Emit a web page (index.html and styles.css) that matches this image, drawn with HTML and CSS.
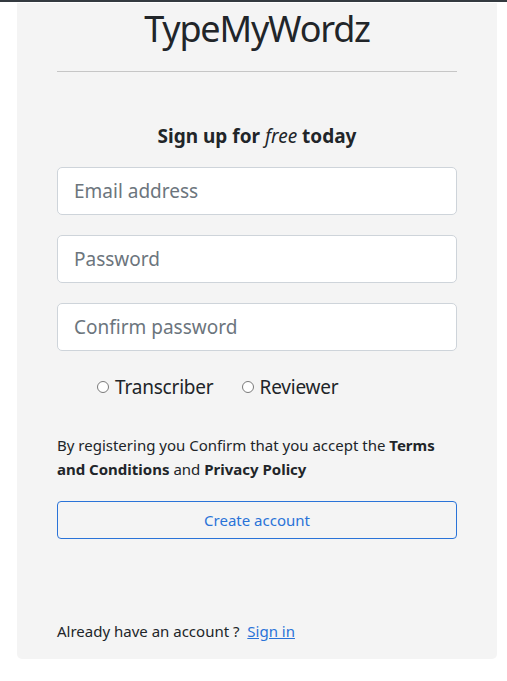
FILE: index.html
```html
<!DOCTYPE html>
<html lang="en">
<head>
<meta charset="utf-8">
<title>TypeMyWordz - Sign up</title>
<link rel="stylesheet" href="styles.css">
</head>
<body>
<div class="topbar"></div>
<main class="card">
  <h1 class="brand">TypeMyWordz</h1>
  <hr class="divider">
  <h2 class="heading">Sign up for <em>free</em> today</h2>
  <form class="form">
    <input class="field" type="email" placeholder="Email address">
    <input class="field" type="password" placeholder="Password">
    <input class="field" type="password" placeholder="Confirm password">
    <div class="roles">
      <label class="role"><input type="radio" name="role" class="radio"> Transcriber</label>
      <label class="role"><input type="radio" name="role" class="radio"> Reviewer</label>
    </div>
    <p class="terms">By registering you Confirm that you accept the <strong>Terms and Conditions</strong> and <strong>Privacy Policy</strong></p>
    <button type="button" class="btn">Create account</button>
  </form>
  <p class="signin">Already have an account ? &nbsp;<a href="#" class="link">Sign in</a></p>
</main>
</body>
</html>
```
FILE: styles.css
```css
* { box-sizing: border-box; }
html, body { margin: 0; padding: 0; background: #fff; }
body {
  font-family: "Noto Sans", "Open Sans", sans-serif;
  color: #212529;
  font-size: 16px;
}
.topbar { height: 2px; background: #343a40; }
.card {
  margin: 1px 10px 0 17px;
  background: #f4f4f4;
  border-radius: 0 0 5px 5px;
  padding: 2px 40px 16px;
  display: flex;
  flex-direction: column;
}
.brand {
  margin: 0;
  font-size: 36px;
  font-weight: 400;
  line-height: 48px;
  text-align: center;
  letter-spacing: -1.2px;
}
.divider {
  margin: 18px 0 0;
  border: 0;
  border-top: 1px solid #c6c6c6;
}
.heading {
  margin: 52px 0 0;
  font-size: 19px;
  font-weight: 700;
  line-height: 24px;
  text-align: center;
}
.heading em { font-weight: 400; }
.form {
  display: flex;
  flex-direction: column;
  margin-top: 19px;
}
.field {
  height: 48px;
  width: 100%;
  margin: 0 0 20px;
  padding: 8px 16px;
  font-family: inherit;
  font-size: 19px;
  color: #495057;
  background: #fff;
  border: 1px solid #ced4da;
  border-radius: 5px;
}
.field::placeholder { color: #6c757d; }
.roles {
  display: flex;
  gap: 28px;
  padding-left: 40px;
  margin-top: 1px;
  height: 30px;
  align-items: center;
}
.role {
  display: flex;
  align-items: center;
  gap: 6px;
  font-size: 19px;
  line-height: 30px;
  color: #212529;
  letter-spacing: -0.2px;
}
.radio {
  appearance: none;
  -webkit-appearance: none;
  width: 12px;
  height: 12px;
  margin: 0;
  border: 1px solid #7a7a7a;
  border-radius: 50%;
  background: #fff;
}
.terms {
  margin: 31px 0 0;
  font-size: 15px;
  line-height: 24px;
}
.terms strong { font-weight: 700; }
.btn {
  margin-top: 20px;
  height: 38px;
  width: 100%;
  font-family: inherit;
  font-size: 15px;
  color: #2a73d8;
  background: transparent;
  border: 1px solid #2a73d8;
  border-radius: 4px;
}
.signin {
  margin: 80px 0 0;
  font-size: 15px;
  line-height: 24px;
}
.link { color: #2a73d8; text-decoration: underline; }
```
